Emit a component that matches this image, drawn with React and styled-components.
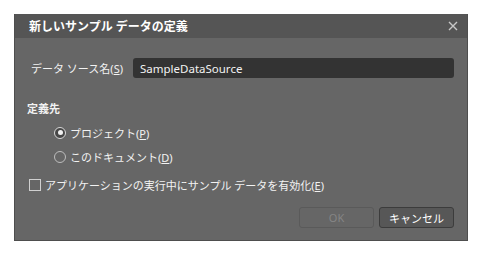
import React from 'react'
import styled, { createGlobalStyle } from 'styled-components'

const Global = createGlobalStyle`
  html, body { margin: 0; background: #ffffff; }
  body { font-family: "Noto Sans", "Noto Sans CJK JP", sans-serif; }
`

export default function App() {
  return (
    <Page>
      <Global />
      <Dialog>
        <TitleBar>
          <Title>新しいサンプル データの定義</Title>
          <Close>
            <svg width="10" height="10" viewBox="0 0 10 10">
              <path d="M1 1 L9 9 M9 1 L1 9" stroke="#c8c8c8" strokeWidth="1.4" />
            </svg>
          </Close>
        </TitleBar>
        <Body>
          <NameRow>
            <Label>データ ソース名(<u>S</u>)</Label>
            <Input defaultValue="SampleDataSource" />
          </NameRow>
          <Section>
            <Heading>定義先</Heading>
            <Radios>
              <Option>
                <Radio $checked />
                <span>プロジェクト(<u>P</u>)</span>
              </Option>
              <Option>
                <Radio />
                <span>このドキュメント(<u>D</u>)</span>
              </Option>
            </Radios>
          </Section>
          <CheckRow>
            <Check />
            <span>アプリケーションの実行中にサンプル データを有効化(<u>E</u>)</span>
          </CheckRow>
          <Footer>
            <Button disabled>OK</Button>
            <Button>キャンセル</Button>
          </Footer>
        </Body>
      </Dialog>
    </Page>
  )
}

const Page = styled.div`
  padding: 14px;
`

const Dialog = styled.div`
  width: 454px;
  height: 227px;
  box-sizing: border-box;
  background: #666666;
  border: 1px solid #4e4e4e;
  border-top: none;
  display: flex;
  flex-direction: column;
`

const TitleBar = styled.div`
  height: 24px;
  background: #555555;
  display: flex;
  align-items: center;
  justify-content: space-between;
  padding: 0 9px 0 14px;
`

const Title = styled.div`
  color: #ffffff;
  font-size: 12px;
  font-weight: bold;
`

const Close = styled.div`
  display: flex;
  align-items: center;
`

const Body = styled.div`
  flex: 1;
  display: flex;
  flex-direction: column;
  padding: 20px 13px 12px 12px;
  color: #f2f2f2;
  font-size: 11px;
`

const NameRow = styled.div`
  display: flex;
  align-items: center;
  justify-content: space-between;
  padding-left: 4px;
`

const Label = styled.span`
  white-space: nowrap;
`

const Input = styled.input`
  width: 321px;
  height: 20px;
  box-sizing: border-box;
  border: none;
  border-radius: 3px;
  background: #333333;
  color: #f2f2f2;
  font-family: inherit;
  font-size: 11.5px;
  padding: 0 7px;
  outline: none;
`

const Section = styled.div`
  margin-top: 22px;
  display: flex;
  flex-direction: column;
`

const Heading = styled.div`
  font-weight: bold;
  font-size: 11px;
`

const Radios = styled.div`
  display: flex;
  flex-direction: column;
  gap: 7px;
  padding-left: 27px;
  margin-top: 8px;
`

const Option = styled.label`
  display: flex;
  align-items: center;
  gap: 4px;
  height: 17px;
`

const Radio = styled.span`
  width: 12px;
  height: 12px;
  box-sizing: border-box;
  border-radius: 50%;
  border: 1px solid ${p => (p.$checked ? '#d8d8d8' : '#bdbdbd')};
  background: ${p => (p.$checked ? '#474747' : 'transparent')};
  display: flex;
  align-items: center;
  justify-content: center;
  &::after {
    content: '';
    width: 5px;
    height: 5px;
    border-radius: 50%;
    background: ${p => (p.$checked ? '#f0f0f0' : 'transparent')};
  }
`

const CheckRow = styled.label`
  display: flex;
  align-items: center;
  gap: 4px;
  margin-top: 11px;
  padding-left: 2px;
  height: 17px;
`

const Check = styled.span`
  width: 12px;
  height: 12px;
  box-sizing: border-box;
  border: 1px solid #d0d0d0;
`

const Footer = styled.div`
  margin-top: auto;
  display: flex;
  justify-content: flex-end;
  gap: 5px;
`

const Button = styled.button`
  width: 75px;
  height: 21px;
  box-sizing: border-box;
  border-radius: 3px;
  font-family: inherit;
  font-size: 11px;
  padding: 0;
  background: ${p => (p.disabled ? 'transparent' : '#575757')};
  border: 1px solid ${p => (p.disabled ? '#5a5a5a' : '#3c3c3c')};
  color: ${p => (p.disabled ? '#858585' : '#ffffff')};
`
